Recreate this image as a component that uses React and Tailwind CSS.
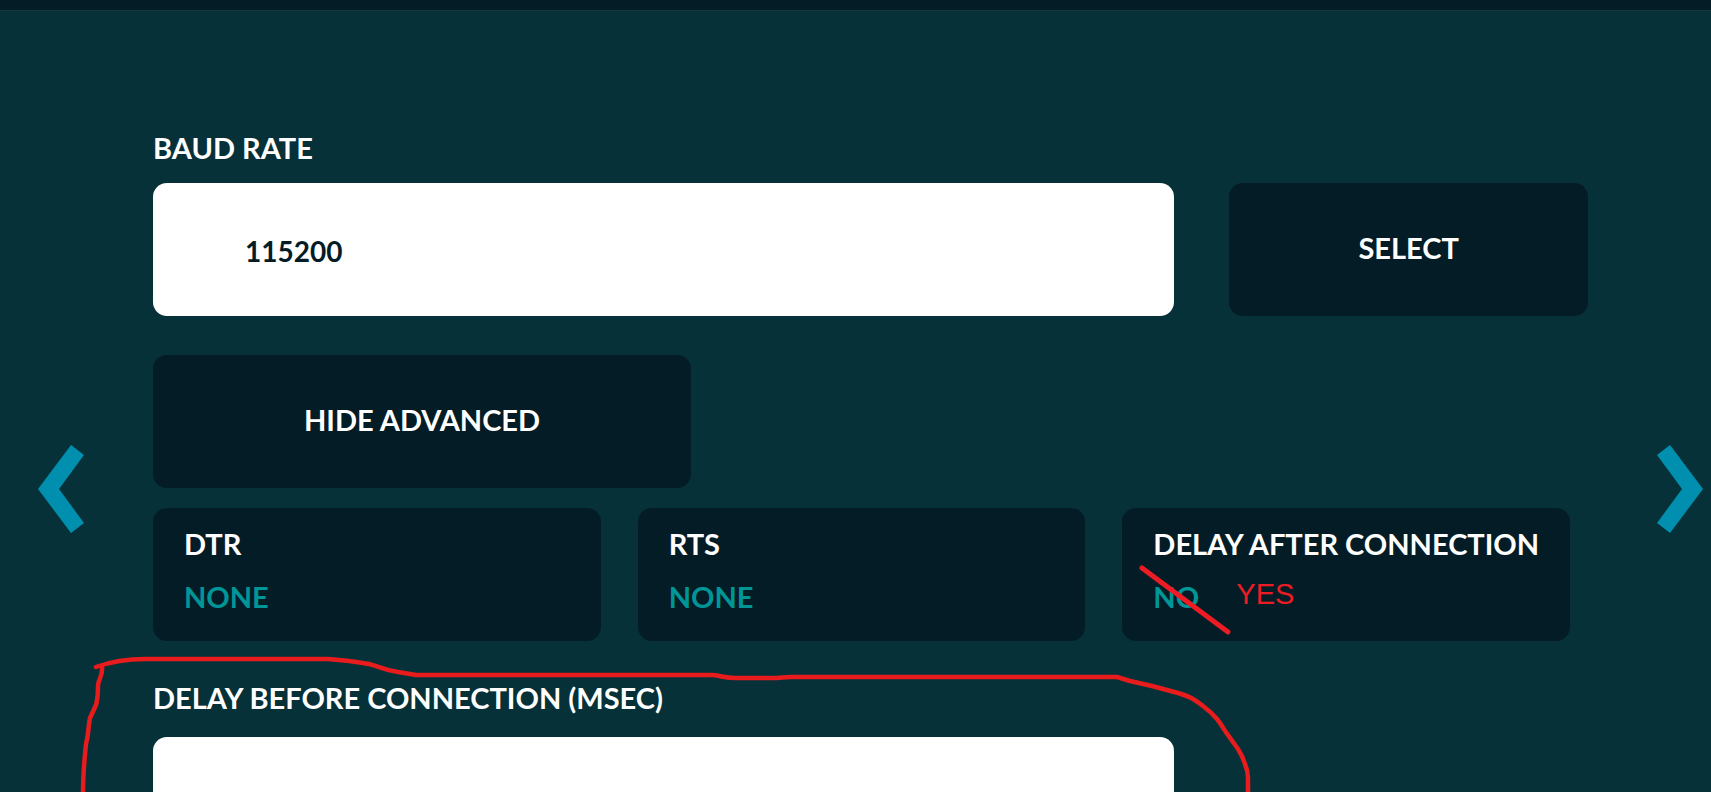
import { useState } from "react";

const ArrowLeft = () => (
  <svg viewBox="0 0 46 88" className="w-[46px] h-[88px] fill-[#008fae]">
    <path d="M33 0L46 10L21 44L46 78L33 88L0 44Z" />
  </svg>
);

const ArrowRight = () => (
  <svg viewBox="0 0 46 88" className="w-[46px] h-[88px] fill-[#008fae]">
    <path d="M13 0L0 10L25 44L0 78L13 88L46 44Z" />
  </svg>
);

const BigButton = ({ children, className, onClick }) => (
  <button
    type="button"
    onClick={onClick}
    className={`h-[133px] rounded-[14px] bg-[#041c26] pb-1 text-center ${className}`}
  >
    {children}
  </button>
);

const OptionCard = ({ title, value, children }) => (
  <div className="relative">
    <button
      type="button"
      className="block w-full h-[133px] rounded-[14px] bg-[#041c26] px-[31px] pt-[18px] pb-[26px] text-left whitespace-nowrap"
    >
      <span className="block">{title}</span>
      <span className="block mt-[17px] text-[#009698]">{value}</span>
    </button>
    {children}
  </div>
);

// red pen: crossed out value and its replacement
const ValueCorrection = () => (
  <div className="absolute left-4 top-14 flex pointer-events-none text-[#ed1c24]">
    <svg viewBox="0 0 96 72" className="w-24 h-18" fill="none" stroke="currentColor" strokeWidth="5" strokeLinecap="round">
      <path d="M4 4L90 68" />
    </svg>
    <span className="pl-0.5 pt-3 font-['Liberation_Sans',sans-serif] font-normal">YES</span>
  </div>
);

// red pen: loop around the delay field
const PenLoop = () => (
  <svg
    viewBox="0 0 1200 260"
    className="absolute -left-[83px] -top-[30px] w-[1200px] h-[260px] pointer-events-none"
    fill="none"
    stroke="#e81c1c"
    strokeWidth="4.5"
    strokeLinecap="round"
    strokeLinejoin="round"
  >
    <path d="M26 17C40 12 56 9 75 9H258C272 10 288 12 299 14C308 16 313 20 328 22L346 25H643C652 26 655 28 665 28H702C711 28 713 27 721 27H1047L1060 31L1082 36L1108 43Q1118 46 1123 49Q1128 52 1133 56Q1141 62 1147 69C1152 75 1154 80 1158 85L1168 99Q1173 107 1175 114Q1178 121 1178 128V170" />
    <path d="M32 17C33 27 28 29 28 36C28 48 27 51 26 55L20 68C18 77 19 83 16 94C14 113 13 125 13 143V170" />
  </svg>
);

export default function App() {
  const [baudRate, setBaudRate] = useState("115200");
  const [delay, setDelay] = useState("");
  const [advanced, setAdvanced] = useState(true);

  return (
    <div className="h-screen overflow-hidden bg-[#063138] font-[Lato,sans-serif] text-[29px] leading-9 font-bold text-white">
      <header className="h-[11px] bg-[#041c26] border-b border-[#12373f]" />
      <div className="flex items-start">
        <button type="button" aria-label="Previous page" className="w-[153px] shrink-0 pl-[38px] mt-[434px]">
          <ArrowLeft />
        </button>

        <main className="grow min-w-0 pt-[119px]">
          <label htmlFor="baud" className="block">BAUD RATE</label>
          <div className="mt-[17px] flex gap-[55px]">
            <input
              id="baud"
              type="text"
              value={baudRate}
              onChange={(e) => setBaudRate(e.target.value)}
              className="grow min-w-0 h-[133px] rounded-[14px] bg-white pl-[92px] pt-0.5 text-[28px] text-[#041c26] outline-none"
            />
            <BigButton className="w-1/4 shrink-0">SELECT</BigButton>
          </div>

          <BigButton className="mt-[39px] w-3/8" onClick={() => setAdvanced(!advanced)}>
            {advanced ? "HIDE ADVANCED" : "SHOW ADVANCED"}
          </BigButton>

          {advanced && (
            <>
              <div className="mt-5 mr-[18px] grid grid-cols-3 gap-[37px]">
                <OptionCard title="DTR" value="NONE" />
                <OptionCard title="RTS" value="NONE" />
                <OptionCard title="DELAY AFTER CONNECTION" value="NO">
                  <ValueCorrection />
                </OptionCard>
              </div>

              <div className="relative mt-[39px]">
                <label htmlFor="delay" className="block">DELAY BEFORE CONNECTION (MSEC)</label>
                <div className="mt-[21px] flex gap-[55px]">
                  <input
                    id="delay"
                    type="text"
                    value={delay}
                    onChange={(e) => setDelay(e.target.value)}
                    className="grow min-w-0 h-[133px] rounded-[14px] bg-white pl-[92px] pt-0.5 text-[28px] text-[#041c26] outline-none"
                  />
                  <div className="w-1/4 shrink-0" />
                </div>
                <PenLoop />
              </div>
            </>
          )}
        </main>

        <button type="button" aria-label="Next page" className="w-[123px] shrink-0 pl-[69px] mt-[434px]">
          <ArrowRight />
        </button>
      </div>
    </div>
  );
}
